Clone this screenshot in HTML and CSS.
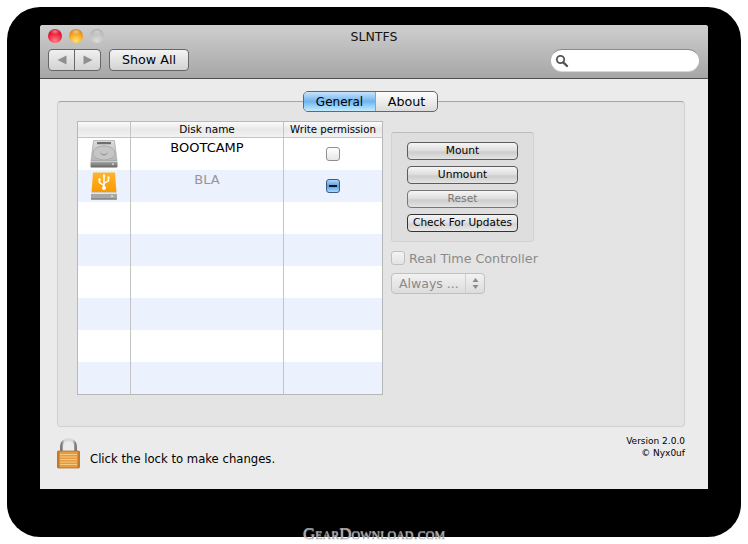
FILE: index.html
```html
<!DOCTYPE html>
<html lang="en">
<head>
<meta charset="utf-8">
<title>SLNTFS</title>
<link rel="stylesheet" href="styles.css">
</head>
<body>
<div class="frame">
  <div class="window">
    <header class="titlebar">
      <div class="lights">
        <span class="light red"></span>
        <span class="light amber"></span>
        <span class="light off"></span>
      </div>
      <div class="title">SLNTFS</div>
      <div class="toolbar">
        <div class="nav">
          <span class="nav-btn"><svg width="10" height="10" viewBox="0 0 10 10"><path d="M0.500 5 L9.500 0.500 V9.500 Z" fill="#8f8f8f"/></svg></span>
          <span class="nav-btn"><svg width="10" height="10" viewBox="0 0 10 10"><path d="M9.500 5 L0.500 0.500 V9.500 Z" fill="#8f8f8f"/></svg></span>
        </div>
        <div class="showall">Show All</div>
        <div class="search">
          <svg width="14" height="14" viewBox="0 0 14 14"><circle cx="5.500" cy="5.500" r="3.700" fill="none" stroke="#555" stroke-width="1.800"/><path d="M8.300 8.300 L12 12" stroke="#555" stroke-width="2.400" stroke-linecap="round"/></svg>
        </div>
      </div>
    </header>
    <main class="content">
      <section class="panel">
        <div class="tabs">
          <span class="tab active">General</span>
          <span class="tab about">About</span>
        </div>
        <div class="panel-body">
          <div class="table">
            <div class="thead">
              <div class="c1"></div>
              <div class="c2">Disk name</div>
              <div class="c3">Write permission</div>
            </div>
            <div class="row">
              <div class="c1">
                <svg width="28" height="28" viewBox="0 0 28 28">
                  <defs>
                    <linearGradient id="hd" x1="0" y1="0" x2="0" y2="1"><stop offset="0" stop-color="#dcdcdc"/><stop offset="1" stop-color="#b4b4b4"/></linearGradient>
                    <linearGradient id="hdb" x1="0" y1="0" x2="0" y2="1"><stop offset="0" stop-color="#e2e2e2"/><stop offset=".25" stop-color="#9a9a9a"/><stop offset="1" stop-color="#666"/></linearGradient>
                  </defs>
                  <path d="M3.500 0.500 H24.500 L27 21 H1 Z" fill="url(#hd)" stroke="#989898" stroke-width=".6"/>
                  <rect x="7" y="2" width="14" height="2.200" fill="#6c6c6c"/>
                  <ellipse cx="14" cy="13" rx="11" ry="7" fill="#c6c6c6" stroke="#ababab"/>
                  <path d="M10.500 13 Q14 17 17.500 13" fill="none" stroke="#868686" stroke-width="1"/>
                  <rect x="0.500" y="21" width="27" height="6.500" rx="1" fill="url(#hdb)"/>
                  <rect x="22" y="23.500" width="2" height="1.300" fill="#dde"/>
                </svg>
              </div>
              <div class="c2 name">BOOTCAMP</div>
              <div class="c3"><span class="check"></span></div>
            </div>
            <div class="row alt">
              <div class="c1">
                <svg width="28" height="28" viewBox="0 0 28 28">
                  <defs><linearGradient id="usb" x1="0" y1="0" x2="0" y2="1"><stop offset="0" stop-color="#ffb52a"/><stop offset="1" stop-color="#f79a05"/></linearGradient></defs>
                  <path d="M3 0.500 H25 L26.500 20.500 H1.500 Z" fill="url(#usb)"/>
                  <path d="M14 3 V16 M14 13.500 L9.500 10.500 V8 M14 11.500 L18.500 8.500 V6.500" fill="none" stroke="#fff" stroke-width="1.500"/>
                  <circle cx="14" cy="16" r="2" fill="#fff"/>
                  <path d="M12.500 4.500 L14 1.500 L15.500 4.500 Z" fill="#fff"/>
                  <circle cx="9.500" cy="7.500" r="1.200" fill="#fff"/>
                  <rect x="17.500" y="4.500" width="2" height="2" fill="#fff"/>
                  <rect x="1" y="20.500" width="26" height="7" rx="1.500" fill="#a8a8a8"/>
                  <rect x="1" y="20.500" width="26" height="1.500" fill="#e4e4e4"/>
                  <rect x="1" y="26.500" width="26" height="1" fill="#6e6e6e"/>
                  <rect x="21" y="23.500" width="2" height="1.500" fill="#e8e4b0"/>
                </svg>
              </div>
              <div class="c2 name muted">BLA</div>
              <div class="c3"><span class="check mixed"><i></i></span></div>
            </div>
            <div class="row"><div class="c1"></div><div class="c2"></div><div class="c3"></div></div>
            <div class="row alt"><div class="c1"></div><div class="c2"></div><div class="c3"></div></div>
            <div class="row"><div class="c1"></div><div class="c2"></div><div class="c3"></div></div>
            <div class="row alt"><div class="c1"></div><div class="c2"></div><div class="c3"></div></div>
            <div class="row"><div class="c1"></div><div class="c2"></div><div class="c3"></div></div>
            <div class="row alt"><div class="c1"></div><div class="c2"></div><div class="c3"></div></div>
          </div>
          <div class="side">
            <div class="group">
              <div class="btn">Mount</div>
              <div class="btn">Unmount</div>
              <div class="btn disabled">Reset</div>
              <div class="btn focus">Check For Updates</div>
            </div>
            <label class="rtc"><span class="check dim"></span>Real Time Controller</label>
            <div class="popup"><span class="popup-label">Always ...</span><span class="popup-arrows"><svg width="7" height="13" viewBox="0 0 7 13"><path d="M3.500 1 L6.500 5 H0.500 Z M3.500 12 L0.500 8 H6.500 Z" fill="#8a8a8a"/></svg></span></div>
          </div>
        </div>
      </section>
      <footer class="foot">
        <svg class="lock" width="23" height="31" viewBox="0 0 23 31">
          <defs>
            <linearGradient id="lk" x1="0" y1="0" x2="1" y2="0"><stop offset="0" stop-color="#b9661c"/><stop offset=".12" stop-color="#e39a42"/><stop offset=".88" stop-color="#e39a42"/><stop offset="1" stop-color="#b9661c"/></linearGradient>
            <linearGradient id="sh" x1="0" y1="0" x2="1" y2="0"><stop offset="0" stop-color="#7c7c7c"/><stop offset=".2" stop-color="#d8d8d8"/><stop offset=".8" stop-color="#d8d8d8"/><stop offset="1" stop-color="#7c7c7c"/></linearGradient>
          </defs>
          <path d="M4.500 14 V8.500 C4.500 -0.500 18.500 -0.500 18.500 8.500 V14" fill="none" stroke="url(#sh)" stroke-width="3"/>
          <rect x="0.500" y="13" width="22" height="17" rx="1" fill="url(#lk)" stroke="#ab6320" stroke-width=".7"/>
          <path d="M3 16.500 H20 M3 19 H20 M3 21.500 H20 M3 24 H20 M3 26.500 H20" stroke="#f4cb80" stroke-width="1"/>
        </svg>
        <span class="lock-text">Click the lock to make changes.</span>
        <div class="version">Version 2.0.0<br>© Nyx0uf</div>
      </footer>
    </main>
  </div>
</div>
<div class="watermark">GearDownload.com</div>
</body>
</html>
```
FILE: styles.css
```css
* { box-sizing: border-box; }
html, body { margin: 0; height: 100%; background: #fff; }
body { position: relative; width: 748px; height: 544px; padding: 7px; overflow: hidden; font-family: "DejaVu Sans", sans-serif; color: #111; }
.frame { width: 734px; height: 530px; background: #000; border-radius: 33px; padding: 18px 33px 48px; }
.window { width: 668px; height: 464px; display: flex; flex-direction: column; border-radius: 3px 3px 0 0; overflow: hidden; background: #ebebeb; }

.titlebar { height: 54px; flex: none; position: relative; background: linear-gradient(#cfcfcf, #a6a6a6); border-bottom: 1px solid #505050; padding: 4px 8px 0; }
.lights { display: flex; gap: 7px; }
.light { width: 14px; height: 14px; border-radius: 50%; }
.red { background: radial-gradient(ellipse 5px 3px at 50% 18%, #fff7 0, #fff0 100%), radial-gradient(circle at 50% 85%, #ff7f8a, #ea1732 60%, #a01a2c); }
.amber { background: radial-gradient(ellipse 5px 3px at 50% 18%, #fff7 0, #fff0 100%), radial-gradient(circle at 50% 85%, #ffe56a, #f59a1c 60%, #b06a1c); }
.off { background: radial-gradient(ellipse 5px 3px at 50% 18%, #fff5 0, #fff0 100%), radial-gradient(circle at 50% 85%, #dcdcdc, #bdbdbd 65%, #989898); }
.title { position: absolute; left: 0; right: 0; top: 4px; text-align: center; font-size: 12.500px; line-height: 16px; }
.toolbar { display: flex; align-items: flex-start; margin-top: 6px; }
.nav { display: flex; width: 53px; height: 22px; border: 1px solid #666; border-radius: 4px; background: linear-gradient(#f0f0f0, #d2d2d2); }
.nav-btn { flex: 1; display: flex; align-items: center; justify-content: center; }
.nav-btn + .nav-btn { border-left: 1px solid #666; }
.showall { width: 80px; height: 22px; margin-left: 8px; border: 1px solid #666; border-radius: 4px; background: linear-gradient(#f4f4f4, #d2d2d2); text-align: center; font-size: 12.700px; line-height: 20px; color: #000; }
.search { width: 148px; height: 22px; margin-left: auto; margin-right: 1px; border-radius: 11px; background: #fff; border-top: 1px solid #8a8a8a; box-shadow: 0 1px 0 #d8d8d8; padding: 3px 0 0 4px; }

.content { flex: 1; padding: 22px 23px 0 17px; }
.panel { height: 326px; position: relative; background: #e4e4e4; border: 1px solid #d0d0d0; border-top-color: #a4a4a4; border-radius: 4px; padding: 19px 0 0 19px; }
.tabs { position: absolute; top: -11px; left: 245px; width: 135px; height: 21px; display: flex; border: 1px solid #666; border-radius: 5px; overflow: hidden; font-size: 12px; line-height: 20px; color: #000; background: linear-gradient(#fdfdfd, #dcdcdc); }
.tab { text-align: center; flex: 1; }
.tab.active { flex: none; width: 72px; background: linear-gradient(#c8e3fb 0, #6fb4ef 50%, #8fcdf8 70%, #c6eafc 100%); border-right: 1px solid #8aa; }
.tab.about { font-size: 12.700px; }

.panel-body { display: flex; align-items: flex-start; }
.table { width: 306px; height: 274px; background: #fff; border: 1px solid #b8b8b8; overflow: hidden; }
.thead { display: flex; height: 16px; background: linear-gradient(#fbfbfb, #e8e8e8 50%, #f2f2f2); border-bottom: 1px solid #c4c4c4; font-size: 10.500px; line-height: 15px; text-align: center; color: #000; }
.thead .c3 { font-size: 10.200px; }
.row { display: flex; height: 32px; }
.row.alt { background: #ebf1fd; }
.c1 { width: 53px; flex: none; display: flex; justify-content: center; align-items: center; border-right: 1px solid #c4c4c4; }
.c2 { width: 153px; flex: none; border-right: 1px solid #c4c4c4; text-align: center; }
.c3 { flex: 1; display: flex; justify-content: center; white-space: nowrap; }
.name { font-size: 13px; line-height: 20px; color: #000; }
.muted { color: #969696; }
.row .c3 { padding-top: 9px; }
.check { display: block; width: 14px; height: 14px; border: 1px solid #8f8f8f; border-radius: 3px; background: linear-gradient(#fff, #e6e6e6); }
.check.mixed { border-color: #3c5a88; background: linear-gradient(#b4d4f4, #559ce6 50%, #a4daf9); display: flex; align-items: center; justify-content: center; }
.check.mixed i { width: 8px; height: 2px; background: #14141f; }

.side { margin-left: 8px; margin-top: 11px; width: 160px; }
.group { width: 143px; height: 110px; padding: 9px 0 0 15px; background: #dedede; border: 1px solid #d2d2d2; border-top-color: #bdbdbd; border-radius: 3px; }
.btn { width: 111px; height: 18px; margin-bottom: 6px; border: 1px solid #5c5c5c; border-radius: 4px; background: linear-gradient(#f6f6f6, #dcdcdc 50%, #cccccc 55%, #e4e4e4); text-align: center; font-size: 10.700px; line-height: 15px; white-space: nowrap; color: #000; }
.btn.disabled { color: #777; border-color: #777; }
.btn.focus { background: linear-gradient(#f4f4f4, #e0e0e0 50%, #d2d2d2 55%, #e8e8e8); border-color: #333; font-size: 10.500px; }
.rtc { display: flex; align-items: center; margin-top: 9px; height: 14px; font-size: 12.700px; color: #8a8a8a; white-space: nowrap; }
.check.dim { margin-right: 4px; flex: none; border-color: #c0c0c0; background: linear-gradient(#f3f3f3, #e4e4e4); }
.popup { display: flex; width: 94px; height: 21px; margin-top: 8px; border: 1px solid #c0c0c0; border-radius: 4px; background: linear-gradient(#f2f2f2, #dcdcdc); font-size: 12.500px; line-height: 19px; color: #8a8a8a; }
.popup-label { width: 73px; padding-left: 7px; white-space: nowrap; }
.popup-arrows { flex: 1; display: flex; justify-content: center; align-items: center; border-left: 1px solid #cfcfcf; }

.foot { display: flex; align-items: flex-start; height: 62px; }
.lock { margin-top: 11px; flex: none; }
.lock-text { margin-left: 10px; margin-top: 24px; font-size: 11.650px; line-height: 16px; color: #000; }
.version { margin-left: auto; margin-top: 8px; text-align: right; font-size: 9px; line-height: 12px; color: #000; }

.watermark { position: absolute; left: 0; right: 0; top: 525px; text-align: center; font-family: "Liberation Serif", serif; font-variant: small-caps; font-size: 17px; line-height: 18px; color: #a8a8a8; text-shadow: 0 1px 1px #d8d8d8; }
```
